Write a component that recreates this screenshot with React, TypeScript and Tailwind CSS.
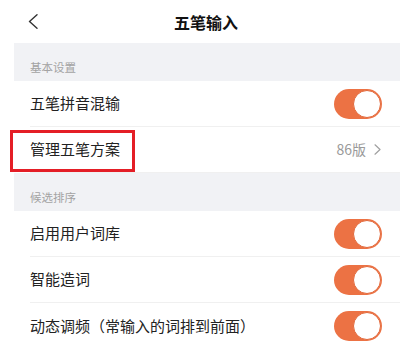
const font = { fontFamily: '"Noto Sans CJK SC", "Noto Sans", sans-serif' };

export default function App() {
    return (
        <div className="w-[420px] h-[346px] bg-white overflow-hidden text-[#222]" style={font}>
            <header className="h-[43px] grid grid-cols-[1fr_auto_1fr] items-center pl-[28px] pr-[36px]">
                <svg width="10" height="15" viewBox="0 0 10 15" fill="none" className="mb-[1px]">
                    <path d="M9 0.8 L1.5 7.5 L9 14.2" stroke="#333" strokeWidth="1.4" strokeLinecap="round" strokeLinejoin="round" />
                </svg>
                <h1 className="text-[16px] font-bold text-[#111] leading-none">五笔输入</h1>
                <div />
            </header>

            <div className="ml-[14px] mr-[20px]">
                <SectionHeader title="基本设置" />
                <ToggleRow label="五笔拼音混输" />
                <div className="relative">
                    <div className="absolute left-[-4px] top-[3px] w-[125px] h-[42px] border-[3px] border-[#e41e26]" />
                    <Row label="管理五笔方案">
                        <span className="flex items-center gap-[8px] text-[14px] text-[#9a9a9a] mr-[1px]">
                            86版
                            <svg width="7" height="11" viewBox="0 0 7 11" fill="none">
                                <path d="M1 0.8 L6 5.5 L1 10.2" stroke="#a0a0a0" strokeWidth="1.2" strokeLinecap="round" strokeLinejoin="round" />
                            </svg>
                        </span>
                    </Row>
                </div>
                <SectionHeader title="候选排序" />
                <ToggleRow label="启用用户词库" />
                <ToggleRow label="智能造词" />
                <ToggleRow label="动态调频（常输入的词排到前面）" last />
            </div>
        </div>
    );
}

function SectionHeader({ title }: any) {
    return (
        <div className="h-[38px] bg-[#f1f2f5] flex items-end pl-4 pb-[5px] text-[11.5px] text-[#a3a3a3]">
            {title}
        </div>
    );
}

function Row({ label, children, last }: any) {
    return (
        <div className="pl-4">
            <div className={`h-[46px] flex items-center justify-between pr-[18px] ${last ? "" : "border-b border-[#f0f0f0]"}`}>
                <span className="text-[15px] text-[#222]">{label}</span>
                {children}
            </div>
        </div>
    );
}

function ToggleRow({ label, last }: any) {
    return (
        <Row label={label} last={last}>
            <div className="w-[48px] h-[30px] rounded-full bg-[#ec7244] flex items-center justify-end pr-[1px]">
                <div className="w-[28px] h-[28px] rounded-full bg-white border border-[#e2683a]" />
            </div>
        </Row>
    );
}
